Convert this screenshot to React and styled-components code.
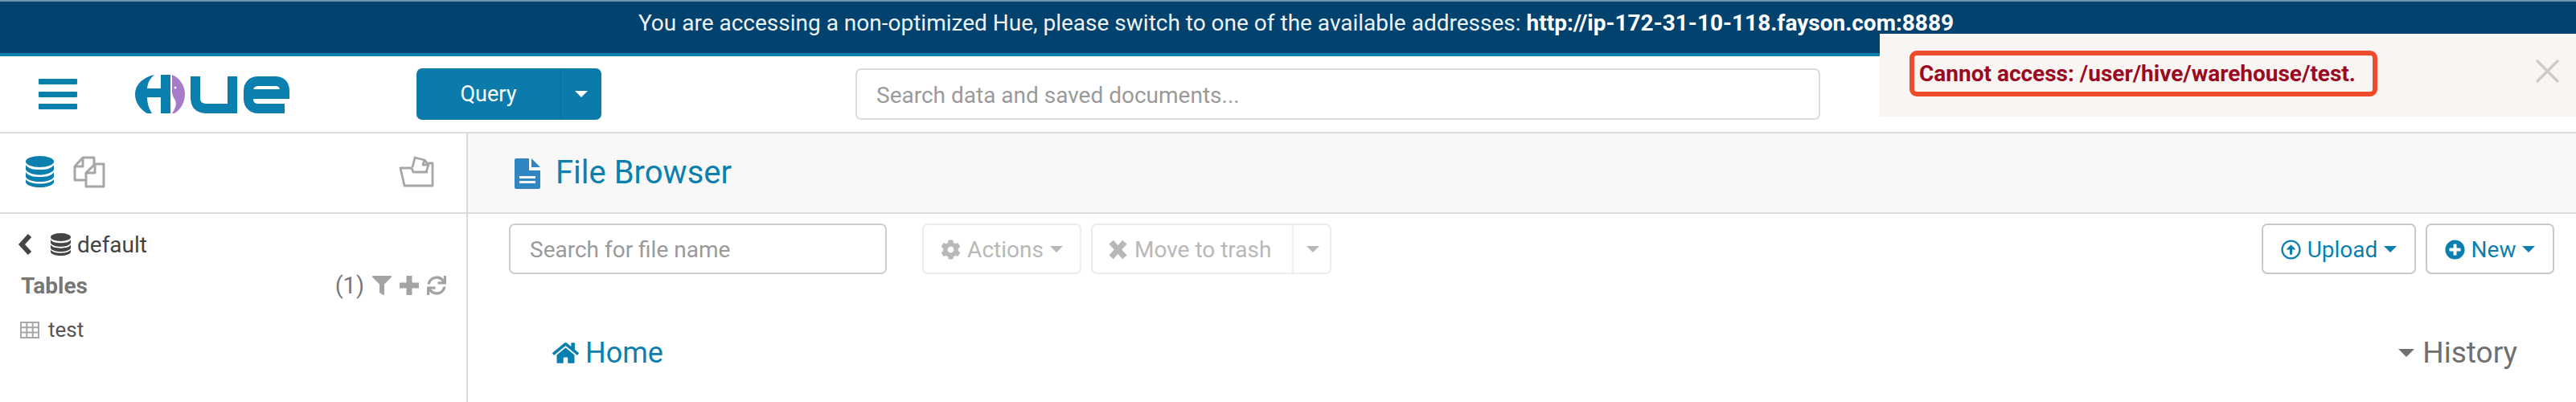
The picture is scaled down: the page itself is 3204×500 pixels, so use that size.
import styled, { createGlobalStyle } from 'styled-components'
import {
	FaCog,
	FaFilter,
	FaHome,
	FaPlusCircle,
	FaRegArrowAltCircleUp,
	FaSync,
} from 'react-icons/fa'

const blue = '#0b7fad'

const GlobalStyle = createGlobalStyle`
	html, body {
		margin: 0;
		background: #fff;
	}
	body {
		font-family: Roboto, "Liberation Sans", sans-serif;
	}
	* {
		box-sizing: border-box;
	}
`

const Page = styled.div`
	position: relative;
	display: flex;
	flex-direction: column;
	height: 500px;
	overflow: hidden;
`

const Banner = styled.div`
	height: 70px;
	padding-bottom: 12px;
	display: flex;
	align-items: center;
	justify-content: center;
	background: #01426f;
	border-top: 2px solid #6f93ad;
	border-bottom: 4px solid ${blue};
	color: #eef3f6;
	font-size: 28px;
	padding-left: 20px;

	b {
		margin-left: 7px;
		color: #fff;
	}
`

const Header = styled.header`
	height: 96px;
	flex: none;
	display: flex;
	align-items: center;
	padding-left: 48px;
	border-bottom: 2px solid #dcdcdc;
`

const Burger = styled.div`
	width: 48px;
	height: 38px;
	display: flex;
	flex-direction: column;
	justify-content: space-between;
	margin-right: 72px;

	span {
		height: 7px;
		border-radius: 1px;
		background: ${blue};
	}
`

const LogoSvg = styled.svg`
	width: 192px;
	height: 48px;
	flex: none;
	margin-right: 158px;
`

const QueryButton = styled.div`
	width: 230px;
	height: 64px;
	flex: none;
	display: flex;
	border-radius: 7px;
	background: #0b7bab;
	color: #fff;
	font-size: 27px;
	margin-right: 316px;
`

const QueryLabel = styled.div`
	width: 180px;
	display: flex;
	align-items: center;
	justify-content: center;
	border-right: 1px solid #0a6c95;
`

const QueryCaret = styled.div`
	flex: 1;
	display: flex;
	align-items: center;
	justify-content: center;
`

const Caret = styled.i`
	display: inline-block;
	flex: none;
	width: 0;
	height: 0;
	border-left: ${(p) => p.$size || 8}px solid transparent;
	border-right: ${(p) => p.$size || 8}px solid transparent;
	border-top: ${(p) => p.$size || 8}px solid currentColor;
`

const TextInput = styled.div`
	width: ${(p) => p.$width}px;
	height: ${(p) => p.$height || 64}px;
	flex: none;
	display: flex;
	align-items: center;
	padding: 2px 0 0 24px;
	border: 2px solid ${(p) => p.$line || '#dcdcdc'};
	border-radius: 7px;
	background: #fff;
	color: #9a9a9a;
	font-size: 28px;
`

const Main = styled.div`
	flex: 1;
	display: flex;
	min-height: 0;
`

const Aside = styled.aside`
	width: 582px;
	flex: none;
	border-right: 2px solid #d9d9d9;
`

const AssistTabs = styled.div`
	height: 100px;
	display: flex;
	align-items: flex-start;
	padding: 28px 40px 0 32px;
	border-bottom: 2px solid #dcdcdc;
	gap: 24px;

	svg:last-child {
		margin-left: auto;
	}
`

const DbCrumb = styled.div`
	display: flex;
	align-items: center;
	height: 28px;
	margin: 24px 0 0 22px;
	color: #444;
	font-size: 28px;

	svg:first-child {
		margin-right: 23px;
	}

	svg:nth-child(2) {
		width: 25px;
		height: 28px;
		margin-right: 8px;
	}
`

const TablesRow = styled.div`
	display: flex;
	align-items: center;
	justify-content: space-between;
	margin: 20px 25px 0 26px;
	height: 34px;
	color: #777;
	font-size: 28px;

	b {
		font-weight: 700;
	}
`

const TableTools = styled.div`
	display: flex;
	align-items: center;
	gap: 10px;
	font-size: 29px;
	color: #777;

	svg {
		color: #a3a3a3;
		width: 24px;
		height: 24px;
	}
`

const TableItem = styled.div`
	display: flex;
	align-items: center;
	gap: 11px;
	margin: 23px 0 0 25px;
	color: #555;
	font-size: 26px;

	svg {
		width: 24px;
		height: 21px;
	}
`

const Content = styled.main`
	flex: 1;
	min-width: 0;
`

const PageHead = styled.div`
	height: 100px;
	display: flex;
	align-items: flex-start;
	padding: 25px 0 0 58px;
	gap: 19px;
	background: #f8f8f8;
	border-bottom: 2px solid #dcdcdc;
	color: ${blue};
	font-size: 40px;

	svg {
		margin-top: 6px;
	}
`

const Toolbar = styled.div`
	display: flex;
	align-items: center;
	margin-top: 12px;
	padding: 0 27px 0 51px;
`

const ButtonGroup = styled.div`
	display: flex;
	gap: 12px;
	margin-left: ${(p) => p.$left || 0}px;
`

const Button = styled.div`
	height: 63px;
	display: flex;
	align-items: center;
	justify-content: ${(p) => (p.$split ? 'flex-start' : 'center')};
	width: ${(p) => p.$width}px;
	gap: 8px;
	padding: 1px 0 0 ${(p) => (p.$split ? 19 : 0)}px;
	border: 2px solid ${(p) => (p.$off ? '#ececec' : '#c8c8c8')};
	border-radius: 7px;
	background: #fff;
	color: ${(p) => (p.$off ? '#b8b8b8' : blue)};
	font-size: 28px;

	svg {
		width: 25px;
		height: 25px;
		flex: none;
	}
`

const SplitPart = styled.div`
	width: 49px;
	height: 63px;
	margin: -1px -2px 0 auto;
	display: flex;
	align-items: center;
	justify-content: center;
	border-left: 2px solid #ececec;
`

const Breadcrumb = styled.div`
	display: flex;
	align-items: center;
	justify-content: space-between;
	margin-top: 76px;
	padding: 0 73px 0 105px;
	font-size: 36px;
`

const HomeLink = styled.div`
	display: flex;
	align-items: center;
	gap: 8px;
	color: ${blue};

	svg {
		width: 33px;
		height: 30px;
	}
`

const History = styled.div`
	display: flex;
	align-items: center;
	gap: 10px;
	color: #6f6f6f;
	font-size: 37px;
`

const Notice = styled.div`
	position: absolute;
	top: 42px;
	left: 2338px;
	right: 0;
	height: 103px;
	display: flex;
	align-items: flex-start;
	justify-content: space-between;
	padding: 21px 21px 0 37px;
	background: #f9f5f3;
`

const NoticeText = styled.div`
	width: 582px;
	height: 57px;
	display: flex;
	align-items: center;
	padding-left: 6px;
	border: 6px solid #ee4b2b;
	border-radius: 9px;
	color: #9a0a22;
	font-size: 28px;
	font-weight: 700;
`

const CloseMark = styled.svg`
	width: 29px;
	height: 29px;
	margin-top: 11px;
`

const Logo = () => (
	<LogoSvg viewBox="0 0 192 48">
		<path
			fill={blue}
			d="M20 1C6 6 0 15 0 24C0 34 6 43 15 48L21 48C17 42 15 35 15 28L32 28L32 48L44 48L44 0L32 0L32 17L15 17C16 10 18 5 24 0Z"
		/>
		<path
			fill="#a67cc9"
			d="M46 0C56 4 62 14 62 24C62 35 56 44 49 48L46 48C50 42 52 37 50 32C48 28 46 26 46 20Z"
		/>
		<circle cx="50" cy="16" r="1.5" fill="#fff" />
		<path fill="none" stroke={blue} strokeWidth="12" d="M75 2V28C75 38 80 42 90 42H121V2" />
		<path
			fill="none"
			stroke={blue}
			strokeWidth="12"
			d="M186 42H153C145 42 141 36 141 30V20C141 12 146 8 153 8H174C182 8 186 12 186 20V24H141"
		/>
	</LogoSvg>
)

const DatabaseIcon = ({ width = 35, height = 39, color = blue }) => (
	<svg width={width} height={height} viewBox="0 0 35 39" fill={color}>
		<ellipse cx="17.5" cy="7" rx="17.5" ry="7" />
		<path d="M0 11C3 16 10 17 17.5 17C25 17 32 16 35 11V17C33 21 25 23.500 17.500 23.500C10 23.500 2 21 0 17Z" />
		<path d="M0 20C3 25 10 26 17.5 26C25 26 32 25 35 20V26C33 30 25 32 17.500 32C10 32 2 30 0 26Z" />
		<path d="M0 29C3 33 10 34.500 17.5 34.500C25 34.500 32 33 35 29V33C33 37 25 39 17.500 39C10 39 2 37 0 33Z" />
	</svg>
)

const FilesIcon = () => (
	<svg width="40" height="40" viewBox="0 0 40 40" fill="none" stroke="#a6a6a6" strokeWidth="3" strokeLinejoin="round">
		<path d="M15 30H2V13L12 2H26V10" />
		<path d="M12 2V13H2" />
		<path d="M16 38V21L27 10H38V38Z" />
		<path d="M27 10V21H16" />
	</svg>
)

const FolderIcon = () => (
	<svg width="44" height="39" viewBox="0 0 44 39" fill="none" stroke="#a6a6a6" strokeWidth="2.800" strokeLinejoin="round">
		<path d="M17 14L20 2L32 5L37 11L34 20" />
		<path d="M32 5L30 11L37 11" />
		<path d="M37 9H42V37H7L2 15H16L18 20H36" />
	</svg>
)

const FileIcon = () => (
	<svg width="32" height="38" viewBox="0 0 32 38" fill="#2f86c1">
		<path d="M2 0H18V15H32V36A2 2 0 0 1 30 38H2A2 2 0 0 1 0 36V2A2 2 0 0 1 2 0Z" />
		<path d="M21 0L32 11H21Z" />
		<rect x="6" y="22" width="20" height="3" fill="#f8f8f8" />
		<rect x="6" y="28" width="20" height="3" fill="#f8f8f8" />
	</svg>
)

const ChevronIcon = () => (
	<svg width="18" height="26" viewBox="0 0 18 26" fill="none" stroke="#444" strokeWidth="6">
		<path d="M15 2L5 13L15 24" />
	</svg>
)

const PlusIcon = () => (
	<svg viewBox="0 0 24 24" fill="none" stroke="currentColor" strokeWidth="7">
		<path d="M12 0V24M0 12H24" />
	</svg>
)

const TimesIcon = () => (
	<svg viewBox="0 0 24 24" fill="none" stroke="currentColor" strokeWidth="7">
		<path d="M4 3L20 21M20 3L4 21" />
	</svg>
)

const TableIcon = () => (
	<svg viewBox="0 0 24 21" fill="none" stroke="#a8a8a8" strokeWidth="2">
		<rect x="1" y="1" width="22" height="19" />
		<path d="M1 7.300H23M1 13.600H23M8.300 1V20M15.700 1V20" />
	</svg>
)

const App = () => {
	return (
		<Page>
			<GlobalStyle />
			<Banner>
				You are accessing a non-optimized Hue, please switch to one of the available addresses:
				<b>http://ip-172-31-10-118.fayson.com:8889</b>
			</Banner>
			<Header>
				<Burger>
					<span />
					<span />
					<span />
				</Burger>
				<Logo />
				<QueryButton>
					<QueryLabel>Query</QueryLabel>
					<QueryCaret>
						<Caret $size={8} />
					</QueryCaret>
				</QueryButton>
				<TextInput $width={1200}>Search data and saved documents...</TextInput>
			</Header>
			<Main>
				<Aside>
					<AssistTabs>
						<DatabaseIcon />
						<FilesIcon />
						<FolderIcon />
					</AssistTabs>
					<DbCrumb>
						<ChevronIcon />
						<DatabaseIcon color="#444" />
						default
					</DbCrumb>
					<TablesRow>
						<b>Tables</b>
						<TableTools>
							(1)
							<FaFilter />
							<PlusIcon />
							<FaSync />
						</TableTools>
					</TablesRow>
					<TableItem>
						<TableIcon />
						test
					</TableItem>
				</Aside>
				<Content>
					<PageHead>
						<FileIcon />
						File Browser
					</PageHead>
					<Toolbar>
						<TextInput $width={470} $height={63} $line="#cdcdcd">
							Search for file name
						</TextInput>
						<ButtonGroup $left={44}>
							<Button $off $width={198}>
								<FaCog />
								Actions
								<Caret $size={8} />
							</Button>
							<Button $off $split $width={299}>
								<TimesIcon />
								Move to trash
								<SplitPart>
									<Caret $size={8} />
								</SplitPart>
							</Button>
						</ButtonGroup>
						<ButtonGroup $left={1157}>
							<Button $width={192}>
								<FaRegArrowAltCircleUp />
								Upload
								<Caret $size={8} />
							</Button>
							<Button $width={160}>
								<FaPlusCircle />
								New
								<Caret $size={8} />
							</Button>
						</ButtonGroup>
					</Toolbar>
					<Breadcrumb>
						<HomeLink>
							<FaHome />
							Home
						</HomeLink>
						<History>
							<Caret $size={10} />
							History
						</History>
					</Breadcrumb>
				</Content>
			</Main>
			<Notice>
				<NoticeText>Cannot access: /user/hive/warehouse/test.</NoticeText>
				<CloseMark viewBox="0 0 29 29" stroke="#cfcbc9" strokeWidth="3.500">
					<path d="M1 1L28 28M28 1L1 28" />
				</CloseMark>
			</Notice>
		</Page>
	)
}

export default App
